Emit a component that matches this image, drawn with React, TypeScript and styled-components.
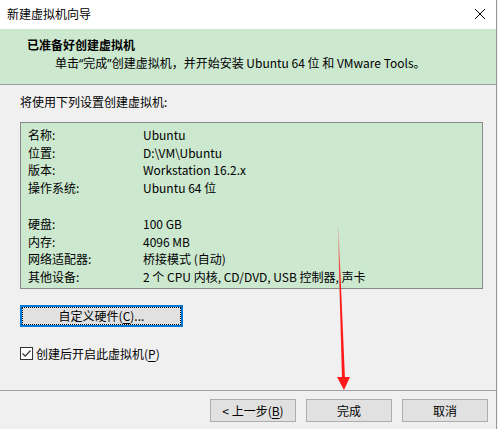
import React from "react";
import styled, { createGlobalStyle } from "styled-components";

const Global = createGlobalStyle`
  html, body { margin: 0; padding: 0; background: #f0f0f0; }
  body { font-family: "Microsoft YaHei UI", "Noto Sans CJK SC", "Noto Sans", sans-serif; font-size: 12px; color: #000; }
`;

const Window = styled.div`
  position: relative;
  width: 496px;
  height: 429px;
  border-right: 1px solid #9a9a9a;
  background: #f0f0f0;
  display: flex;
  flex-direction: column;
  overflow: hidden;
`;

const TitleBar = styled.div`
  height: 29px;
  background: #fff;
  display: flex;
  align-items: center;
  justify-content: space-between;
  padding: 0 10px 0 7px;
  flex-shrink: 0;
`;

const TitleText = styled.span`
  font-size: 12px;
  line-height: 16px;
  margin-top: -2px;
`;

const CloseBtn = styled.div`
  width: 12px;
  height: 12px;
  margin-top: -2px;
  display: flex;
`;

const Header = styled.div`
  height: 56px;
  background: #cce8cf;
  border-bottom: 1px solid #a0a0a0;
  padding: 7px 0 0 27px;
  box-sizing: border-box;
  flex-shrink: 0;
`;

const HeaderTitle = styled.div`
  font-weight: bold;
  line-height: 17px;
`;

const HeaderSub = styled.div`
  margin-top: 1px;
  padding-left: 28px;
  line-height: 17px;
`;

const Quote = styled.span`
  font-family: "Noto Sans", "Liberation Sans", sans-serif;
`;

const Body = styled.div`
  flex: 1;
  padding: 8px 0 0 20px;
  display: flex;
  flex-direction: column;
  align-items: flex-start;
`;

const Intro = styled.div`
  line-height: 17px;
`;

const Summary = styled.div`
  margin-top: 12px;
  width: 463px;
  height: 167px;
  box-sizing: border-box;
  background: #cce8cf;
  border: 1px solid #8a8a8a;
  padding: 3px 0 0 7px;
`;

const Row = styled.div`
  display: grid;
  grid-template-columns: 115px 1fr;
  line-height: 17.5px;
  height: 17.5px;
`;

const Spacer = styled.div`
  height: 19px;
`;

const FocusButton = styled.button`
  margin-top: 16px;
  width: 163px;
  height: 22px;
  box-sizing: border-box;
  background: #e1e1e1;
  border: 2px solid #0078d7;
  outline: 1px dotted #000;
  outline-offset: -3px;
  font: inherit;
  color: #000;
  padding: 0;
  line-height: 16px;
`;

const CheckRow = styled.label`
  margin-top: 18px;
  display: flex;
  align-items: center;
  gap: 3px;
  line-height: 17px;
`;

const CheckBox = styled.span`
  width: 13px;
  height: 13px;
  box-sizing: border-box;
  border: 1px solid #333;
  background: #fff;
  display: flex;
  align-items: center;
  justify-content: center;
`;

const U = styled.span`
  text-decoration: underline;
  text-underline-offset: 2px;
`;

const Footer = styled.div`
  height: 39px;
  border-top: 1px solid #a0a0a0;
  box-sizing: border-box;
  display: flex;
  justify-content: flex-end;
  align-items: flex-start;
  padding: 8px 8px 0 0;
  gap: 10px;
  flex-shrink: 0;
`;

const DlgButton = styled.button`
  width: 86px;
  height: 23px;
  box-sizing: border-box;
  background: #e1e1e1;
  border: 1px solid #adadad;
  font: inherit;
  color: #000;
  padding: 0;
  line-height: 16px;
`;

const ArrowLayer = styled.svg`
  position: absolute;
  left: 0;
  top: 0;
  pointer-events: none;
`;

const rows1 = [
  ["名称:", "Ubuntu"],
  ["位置:", "D:\\VM\\Ubuntu"],
  ["版本:", "Workstation 16.2.x"],
  ["操作系统:", "Ubuntu 64 位"],
];
const rows2 = [
  ["硬盘:", "100 GB"],
  ["内存:", "4096 MB"],
  ["网络适配器:", "桥接模式 (自动)"],
  ["其他设备:", "2 个 CPU 内核, CD/DVD, USB 控制器, 声卡"],
];

export default function App() {
  return (
    <>
      <Global />
      <Window>
        <TitleBar>
          <TitleText>新建虚拟机向导</TitleText>
          <CloseBtn>
            <svg width="12" height="12" viewBox="0 0 12 12">
              <path d="M1 1 L11 11 M11 1 L1 11" stroke="#000" strokeWidth="1" />
            </svg>
          </CloseBtn>
        </TitleBar>
        <Header>
          <HeaderTitle>已准备好创建虚拟机</HeaderTitle>
          <HeaderSub>
            单击<Quote>“</Quote>完成<Quote>”</Quote>创建虚拟机，并开始安装 Ubuntu 64 位 和 VMware Tools。
          </HeaderSub>
        </Header>
        <Body>
          <Intro>将使用下列设置创建虚拟机:</Intro>
          <Summary>
            {rows1.map(([k, v]) => (
              <Row key={k}>
                <span>{k}</span>
                <span>{v}</span>
              </Row>
            ))}
            <Spacer />
            {rows2.map(([k, v]) => (
              <Row key={k}>
                <span>{k}</span>
                <span>{v}</span>
              </Row>
            ))}
          </Summary>
          <FocusButton>
            自定义硬件(<U>C</U>)...
          </FocusButton>
          <CheckRow>
            <CheckBox>
              <svg width="11" height="11" viewBox="0 0 11 11">
                <path d="M1.5 5.5 L4.2 8.2 L9.5 2.5" stroke="#333" strokeWidth="1.2" fill="none" />
              </svg>
            </CheckBox>
            <span>
              创建后开启此虚拟机(<U>P</U>)
            </span>
          </CheckRow>
        </Body>
        <Footer>
          <DlgButton>
            &lt; 上一步(<U>B</U>)
          </DlgButton>
          <DlgButton>完成</DlgButton>
          <DlgButton>取消</DlgButton>
        </Footer>
        <ArrowLayer width="496" height="429" viewBox="0 0 496 429">
          <defs>
            <linearGradient id="fade" x1="0" y1="225" x2="0" y2="280" gradientUnits="userSpaceOnUse">
              <stop offset="0" stopColor="#ff1a1a" stopOpacity="0.1" />
              <stop offset="1" stopColor="#ff1a1a" stopOpacity="1" />
            </linearGradient>
          </defs>
          <polygon points="337.8,226 338.4,226 345,379 342,379" fill="url(#fade)" />
          <polygon points="337,377 350,377 344,390" fill="#ff1a1a" />
        </ArrowLayer>
      </Window>
    </>
  );
}
